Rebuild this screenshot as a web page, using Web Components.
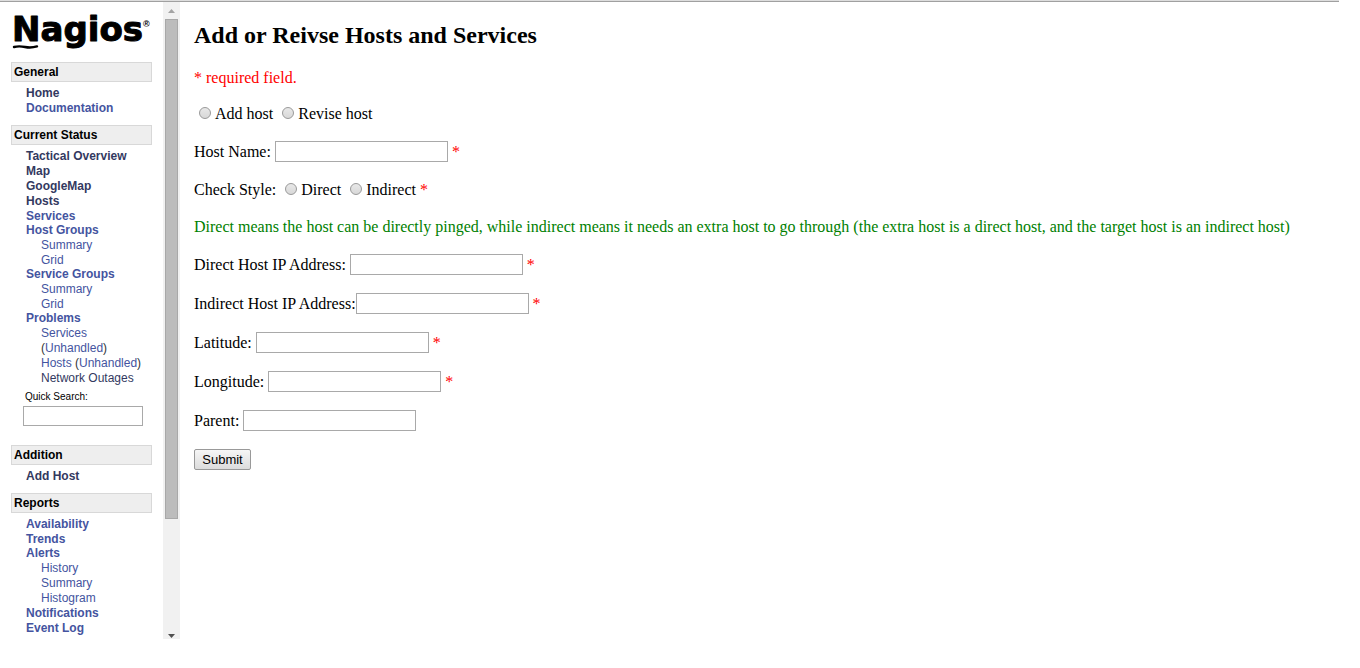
<!DOCTYPE html>
<html lang="en">
<head>
<meta charset="utf-8">
<title>Nagios</title>
<style>
  body { margin: 0; background: #fff; }
</style>
</head>
<body>
<nagios-app></nagios-app>

<template id="t-app">
  <style>
    :host { display: flex; flex-direction: column; min-height: calc(100vh - 29px); margin-right: 21px; border-top: 1px solid #ddd; box-sizing: border-box; }
    .frames { flex: 1; display: flex; border-top: 1px solid #a0a0a0; }
    main { flex: 1; }
  </style>
  <div class="frames">
    <side-nav></side-nav>
    <scroll-track></scroll-track>
    <main><host-form></host-form></main>
  </div>
</template>

<template id="t-logo">
  <style>
    :host { display: block; height: 60px; }
    svg { display: block; overflow: visible; }
    text { font-family: "DejaVu Sans", sans-serif; font-weight: bold; font-size: 34px; stroke: #000; stroke-width: 1; stroke-linejoin: round; }
    .mark { font-family: "Liberation Sans", sans-serif; font-size: 9px; stroke: none; }
  </style>
  <svg width="141" height="48" viewBox="0 0 141 48" role="img" aria-label="Nagios">
    <text x="1" y="39">Nagios</text>
    <text class="mark" x="132" y="25">®</text>
    <path d="M3 45q5-1.200 11 0t12-.6" fill="none" stroke="#000" stroke-width="2.400" stroke-linecap="round"/>
  </svg>
</template>

<template id="t-nav">
  <style>
    :host { display: block; box-sizing: border-box; flex: 0 0 163px; padding: 0 11px; }
  </style>
  <nav>
    <nagios-logo></nagios-logo>
    <nav-section heading="General">
      <nav-item seen>Home</nav-item>
      <nav-item>Documentation</nav-item>
    </nav-section>
    <nav-section heading="Current Status">
      <nav-item seen>Tactical Overview</nav-item>
      <nav-item seen>Map</nav-item>
      <nav-item seen>GoogleMap</nav-item>
      <nav-item seen>Hosts</nav-item>
      <nav-item>Services</nav-item>
      <nav-item group>Host Groups</nav-item>
      <nav-item sub>Summary</nav-item>
      <nav-item sub>Grid</nav-item>
      <nav-item group>Service Groups</nav-item>
      <nav-item sub>Summary</nav-item>
      <nav-item sub>Grid</nav-item>
      <nav-item group>Problems</nav-item>
      <nav-item sub extra="Unhandled">Services</nav-item>
      <nav-item sub extra="Unhandled">Hosts</nav-item>
      <nav-item sub seen>Network Outages</nav-item>
      <quick-search slot="after"></quick-search>
    </nav-section>
    <nav-section heading="Addition">
      <nav-item seen>Add Host</nav-item>
    </nav-section>
    <nav-section heading="Reports">
      <nav-item>Availability</nav-item>
      <nav-item>Trends</nav-item>
      <nav-item group>Alerts</nav-item>
      <nav-item sub>History</nav-item>
      <nav-item sub>Summary</nav-item>
      <nav-item sub>Histogram</nav-item>
      <nav-item>Notifications</nav-item>
      <nav-item>Event Log</nav-item>
    </nav-section>
  </nav>
</template>

<template id="t-section">
  <style>
    :host { display: block; margin-bottom: 9px; font: 12px/15px "Liberation Sans", Arial, sans-serif; }
    :host(:last-of-type) { margin-bottom: 0; }
    h2 { margin: 0 0 4px; padding: 2px 2px 1px; border: 1px solid #d8d8d8; background: #eee; color: #000; font: bold 12px/15px "Liberation Sans", Arial, sans-serif; }
  </style>
  <h2></h2>
  <div><slot></slot></div>
  <slot name="after"></slot>
</template>

<template id="t-item">
  <style>
    :host { display: block; padding-left: 15px; font-weight: bold; color: #4454a0; }
    :host([sub]) { padding-left: 30px; font-weight: normal; }
    :host([group]) { margin-top: -1px; }
    :host([seen]) { color: #33395f; }
    a { color: inherit; text-decoration: none; }
    .extra { display: inline-block; color: #333; }
    .extra a { color: #4454a0; }
    .extra[hidden] { display: none; }
  </style>
  <a href="#"><slot></slot></a> <span class="extra" hidden>(<a href="#"></a>)</span>
</template>

<template id="t-search">
  <style>
    :host { display: block; padding: 4px 0 10px 12px; }
    label { display: block; padding: 0 0 3px 2px; font: 10px/13px "Liberation Sans", Arial, sans-serif; color: #000; }
    input { display: block; box-sizing: border-box; width: 120px; height: 20px; padding: 1px; border: 1px solid #a9a9a9; font: 12px "Liberation Sans", Arial, sans-serif; }
  </style>
  <label for="q">Quick Search:</label>
  <input id="q" type="text">
</template>

<template id="t-scroll">
  <style>
    :host { display: flex; flex-direction: column; flex: 0 0 17px; background: #f1f1f1; }
    svg { display: block; flex: none; }
    .track { flex: 1; display: flex; flex-direction: column; padding: 0 2px; }
    .thumb { flex: 0 0 83%; box-sizing: border-box; background: #bcbcbc; border: 1px solid #a8a8a8; }
  </style>
  <svg width="17" height="17"><path d="M5 11h7L8.500 7z" fill="#a3a3a3"/></svg>
  <div class="track"><div class="thumb"></div></div>
  <svg width="17" height="17"><path d="M5 12h7L8.500 16z" fill="#505050"/></svg>
</template>

<template id="t-form">
  <style>
    :host { display: block; padding: 19px 14px 0; font: 16px/18px "Liberation Serif", "Times New Roman", serif; color: #000; }
    h1 { margin: 0 0 20px; font-size: 24px; line-height: 28px; font-weight: bold; }
    form { display: flex; flex-direction: column; align-items: flex-start; gap: 18px; }
    p { margin: 0; }
    .required { color: #f00; }
    .note { color: #008000; }
    .row { display: flex; gap: 4px; align-items: center; }
    .check { height: 20px; }
    .option { display: flex; align-items: center; gap: 4px; margin-left: 5px; }
    input { appearance: none; width: 12px; height: 12px; margin: 0 0 3px; border: 1px solid #999; border-radius: 50%; background: linear-gradient(#e8e8e8, #d8d8d8); }
    button { box-sizing: border-box; width: 57px; height: 21px; padding: 0; border: 1px solid #999; border-radius: 2px; background: linear-gradient(#f6f6f6, #dcdcdc); color: #000; font: 13px "Liberation Sans", Arial, sans-serif; }
  </style>
  <h1>Add or Reivse Hosts and Services</h1>
  <form>
    <p class="required">* required field.</p>
    <div class="row">
      <label class="option"><input type="radio" name="action">Add host</label>
      <label class="option"><input type="radio" name="action">Revise host</label>
    </div>
    <text-field required>Host Name:</text-field>
    <div class="row check">
      <span>Check Style:</span>
      <label class="option"><input type="radio" name="style">Direct</label>
      <label class="option"><input type="radio" name="style">Indirect</label>
      <span class="required">*</span>
    </div>
    <p class="note">Direct means the host can be directly pinged, while indirect means it needs an extra host to go through (the extra host is a direct host, and the target host is an indirect host)</p>
    <text-field required>Direct Host IP Address:</text-field>
    <text-field required tight>Indirect Host IP Address:</text-field>
    <text-field required>Latitude:</text-field>
    <text-field required>Longitude:</text-field>
    <text-field>Parent:</text-field>
    <button type="button">Submit</button>
  </form>
</template>

<template id="t-field">
  <style>
    :host { display: flex; align-items: center; }
    label { margin-right: 4px; }
    :host([tight]) label { margin-right: 0; }
    input { box-sizing: border-box; width: 173px; height: 21px; padding: 1px; border: 1px solid #a9a9a9; margin: 0 4px 0 0; font: 13px "Liberation Sans", Arial, sans-serif; }
    span { display: none; color: #f00; }
    :host([required]) span { display: inline; }
  </style>
  <label for="field"><slot></slot></label><input id="field" type="text"><span>*</span>
</template>

<script>
  class Base extends HTMLElement {
    constructor() {
      super();
      const source = document.getElementById(this.constructor.template);
      this.attachShadow({ mode: 'open' }).append(source.content.cloneNode(true));
    }
  }
  const simple = id => class extends Base { static template = id; };

  class NavSection extends Base {
    static template = 't-section';
    connectedCallback() {
      this.shadowRoot.querySelector('h2').textContent = this.getAttribute('heading');
    }
  }

  class NavItem extends Base {
    static template = 't-item';
    connectedCallback() {
      const extra = this.getAttribute('extra');
      if (!extra) return;
      const box = this.shadowRoot.querySelector('.extra');
      box.hidden = false;
      box.querySelector('a').textContent = extra;
    }
  }

  customElements.define('text-field', simple('t-field'));
  customElements.define('host-form', simple('t-form'));
  customElements.define('scroll-track', simple('t-scroll'));
  customElements.define('quick-search', simple('t-search'));
  customElements.define('nav-item', NavItem);
  customElements.define('nav-section', NavSection);
  customElements.define('nagios-logo', simple('t-logo'));
  customElements.define('side-nav', simple('t-nav'));
  customElements.define('nagios-app', simple('t-app'));
</script>
</body>
</html>
